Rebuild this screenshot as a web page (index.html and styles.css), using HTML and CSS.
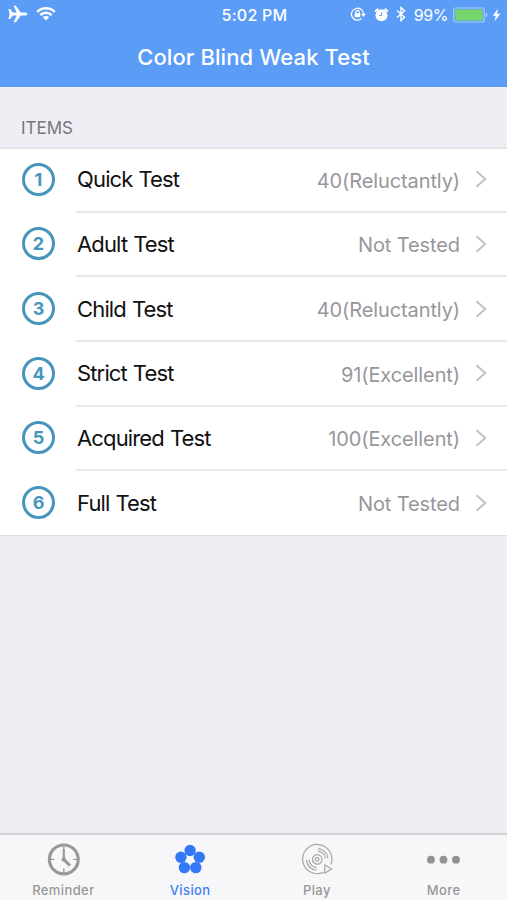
FILE: index.html
```html
<!DOCTYPE html>
<html lang="en">
<head>
<meta charset="utf-8">
<title>Color Blind Weak Test</title>
<link rel="stylesheet" href="styles.css">
</head>
<body>
<div class="app">
  <header class="header">
    <div class="status">
      <div class="status-left">
        <svg width="20" height="18" viewBox="0 0 20 18" fill="#fff"><path d="M.5 4h1.7l2.5 3.5h4L5.6.8h2.2l5 6.7h4.6c2.6 0 2.6 3 0 3h-4.6l-5 6.7H5.6l3.1-6.7h-4L2.2 14H.5l1-5z"/></svg>
        <svg width="20" height="14" viewBox="0 0 20 14" fill="none" stroke="#fff" stroke-width="2.5"><path d="M1.2 4.9a12.6 12.6 0 0 1 17.6 0M4.3 8.1a8 8 0 0 1 11.4 0"/><path d="M10 13.6 6.8 10.3a4.6 4.6 0 0 1 6.4 0z" fill="#fff" stroke="none"/></svg>
      </div>
      <div class="status-time">5:02 PM</div>
      <div class="status-right">
        <svg class="lock" width="16" height="16" viewBox="0 0 16 16" fill="none" stroke="#fff" stroke-width="1.2"><path d="M11.8 12.4A6 6 0 1 1 13.5 8"/><path d="M11 7.7h5l-2.5 3.2z" fill="#fff" stroke="none"/><path d="M4.7 7.2h5.6v4H4.7z" fill="#fff" stroke="none"/><path d="M5.8 7.5V6a1.7 1.7 0 0 1 3.4 0v1.5"/></svg>
        <svg class="alarm" width="15" height="15" viewBox="0 0 15 15"><circle cx="7.5" cy="8.2" r="6" fill="#fff"/><path d="M1.6 4 3.6 2.4M13.4 4l-2-1.6" stroke="#fff" stroke-width="2" stroke-linecap="round"/><path d="M7.5 5.2v3.3H5.2" stroke="#5b9cf7" stroke-width=".9" fill="none"/></svg>
        <svg class="bt" width="10" height="16" viewBox="0 0 10 16" fill="none" stroke="#fff" stroke-width="1.4"><path d="M1 4.4 8.6 11.3 5 14.5V1.5l3.6 3.2L1 11.6"/></svg>
        <span class="percent">99%</span>
        <svg class="battery" width="36" height="16" viewBox="0 0 36 16"><rect x=".7" y="1" width="30.6" height="14" rx="2" fill="none" stroke="#a9cbfb" stroke-width="1.2"/><rect x="2.3" y="2.6" width="27.4" height="10.8" rx="1" fill="#74d66d"/><path d="M32.8 5.7c2.3.7 2.3 3.9 0 4.6z" fill="#a9cbfb"/></svg>
        <svg class="bolt" width="9" height="14" viewBox="0 0 9 14" fill="#fff"><path d="M6 .6.8 7.8h3L2.5 13.4 8.3 5.8H5z"/></svg>
      </div>
    </div>
    <h1 class="title">Color Blind Weak Test</h1>
  </header>
  <main class="content">
    <h2 class="section">ITEMS</h2>
    <ul class="list">
      <li class="row"><span class="num">1</span><div class="cell"><span class="name">Quick Test</span><span class="value">40(Reluctantly)</span><svg class="chev" viewBox="0 0 12 18"><path d="m1.5 1.3 8.7 7.7-8.7 7.7"/></svg></div></li>
      <li class="row"><span class="num">2</span><div class="cell"><span class="name">Adult Test</span><span class="value">Not Tested</span><svg class="chev" viewBox="0 0 12 18"><path d="m1.5 1.3 8.7 7.7-8.7 7.7"/></svg></div></li>
      <li class="row"><span class="num">3</span><div class="cell"><span class="name">Child Test</span><span class="value">40(Reluctantly)</span><svg class="chev" viewBox="0 0 12 18"><path d="m1.5 1.3 8.7 7.7-8.7 7.7"/></svg></div></li>
      <li class="row"><span class="num">4</span><div class="cell"><span class="name">Strict Test</span><span class="value">91(Excellent)</span><svg class="chev" viewBox="0 0 12 18"><path d="m1.5 1.3 8.7 7.7-8.7 7.7"/></svg></div></li>
      <li class="row"><span class="num">5</span><div class="cell"><span class="name">Acquired Test</span><span class="value">100(Excellent)</span><svg class="chev" viewBox="0 0 12 18"><path d="m1.5 1.3 8.7 7.7-8.7 7.7"/></svg></div></li>
      <li class="row"><span class="num">6</span><div class="cell"><span class="name">Full Test</span><span class="value">Not Tested</span><svg class="chev" viewBox="0 0 12 18"><path d="m1.5 1.3 8.7 7.7-8.7 7.7"/></svg></div></li>
    </ul>
  </main>
  <nav class="tabs">
    <div class="tab">
      <svg width="34" height="34" viewBox="0 0 34 34" fill="none" stroke="#999"><circle cx="17.8" cy="17.4" r="14.4" stroke-width="3.2"/><path d="M17.8 4.4v4M17.8 26.4v4M4.8 17.4h3.5M27.3 17.4h3.5" stroke-width="1.4"/><path d="M17.8 8.4v9" stroke-width="2.2" stroke-linecap="round"/><path d="m17.8 17.4 6.2 6.2" stroke-width="3"/><circle cx="17.8" cy="17.4" r="2.2" fill="#999" stroke="none"/></svg>
      <span>Reminder</span>
    </div>
    <div class="tab active">
      <svg width="34" height="34" viewBox="0 0 34 34" fill="#3478f6"><circle cx="17.1" cy="8.5" r="5.7"/><circle cx="26.3" cy="15.2" r="5.7"/><circle cx="22.8" cy="25.6" r="5.7"/><circle cx="11.4" cy="25.6" r="5.7"/><circle cx="7.9" cy="15.2" r="5.7"/></svg>
      <span>Vision</span>
    </div>
    <div class="tab">
      <svg width="34" height="34" viewBox="0 0 34 34" fill="none" stroke="#a5a5a5" stroke-width="1.2"><path d="M23.6 30.2A14.6 14.6 0 1 1 30.8 22.5"/><circle cx="17.2" cy="17.4" r="4.7"/><circle cx="17.2" cy="17.4" r="1.8"/><path d="M18 6.6A10.8 10.8 0 0 1 28 16.4M18 9.2a8.2 8.2 0 0 1 7.4 7.2M6.4 17.9a10.8 10.8 0 0 0 10.2 10.3M9 17.9a8.2 8.2 0 0 0 7.6 7.7"/><path d="m24.8 23 6.8 4.1-6.8 4.1z"/></svg>
      <span>Play</span>
    </div>
    <div class="tab">
      <svg width="34" height="34" viewBox="0 0 34 34" fill="#929292"><circle cx="3.9" cy="17.7" r="3.9"/><circle cx="16.5" cy="17.7" r="3.9"/><circle cx="29" cy="17.7" r="3.9"/></svg>
      <span>More</span>
    </div>
  </nav>
</div>
</body>
</html>
```
FILE: styles.css
```css
* { box-sizing: border-box; }
body {
  margin: 0;
  font-family: Inter, "Liberation Sans", sans-serif;
  background: #efeef4;
}
svg { display: block; flex: none; }
.app {
  height: 900px;
  display: flex;
  flex-direction: column;
  overflow: hidden;
}
.header {
  height: 87px;
  flex: none;
  background: #5b9cf7;
  color: #fff;
}
.status {
  height: 29px;
  display: grid;
  grid-template-columns: 1fr auto 1fr;
  align-items: center;
  padding: 0 6px 0 8px;
}
.status-left { display: flex; align-items: center; gap: 8px; padding-bottom: 1px; }
.status-time { font-size: 16px; font-weight: 500; letter-spacing: .25px; }
.status-right { display: flex; align-items: center; justify-content: flex-end; }
.lock { margin-bottom: 1px; }
.alarm { margin-left: 8px; margin-bottom: 1px; }
.bt { margin-left: 7px; margin-bottom: 1px; }
.percent { font-size: 16px; margin-left: 8px; letter-spacing: -.4px; }
.battery { margin-left: 5px; }
.bolt { margin-left: 3px; }
.title {
  margin: 0;
  height: 58px;
  line-height: 57px;
  text-align: center;
  font-size: 22px;
  font-weight: 500;
  letter-spacing: .1px;
}
.content { flex: 1; }
.section {
  margin: 0;
  height: 60px;
  padding: 31px 0 0 21px;
  font-size: 17px;
  line-height: 21px;
  font-weight: 400;
  letter-spacing: 0;
  color: #77777c;
}
.list {
  margin: 0;
  padding: 1px 0 0;
  height: 389px;
  list-style: none;
  background: #fff;
  box-shadow: inset 0 2px #e4e4e7, inset 0 -1px #dcdce0;
  display: grid;
  grid-template-rows: repeat(6, 1fr);
}
.row { display: flex; padding-left: 22px; }
.num {
  width: 33px;
  height: 33px;
  margin: 14.6px 21px 0 0;
  flex: none;
  border: 3px solid #4595bd;
  border-radius: 50%;
  color: #4595bd;
  font-size: 18px;
  line-height: 27px;
  font-weight: 700;
  text-align: center;
}
.cell {
  flex: 1;
  display: flex;
  align-items: center;
  padding: 0 20px 0 1px;
  border-bottom: 2px solid #e8e8ea;
}
.row:last-child .cell { border-bottom-color: transparent; }
.name { flex: 1; font-size: 22px; letter-spacing: -.85px; word-spacing: .6px; color: #111; }
.value { font-size: 20px; letter-spacing: -.1px; color: #97979b; padding-top: 3px; }
.chev {
  width: 12px;
  height: 18px;
  margin-left: 15px;
  fill: none;
  stroke: #c2c2c6;
  stroke-width: 2;
}
.tabs {
  height: 67px;
  flex: none;
  display: grid;
  grid-template-columns: repeat(4, 1fr);
  background: #f7f7f9;
  border-top: 2px solid #d0d0d5;
}
.tab {
  display: flex;
  flex-direction: column;
  align-items: center;
  padding-top: 7px;
  color: #979797;
  font-size: 13px;
  line-height: 16px;
  font-weight: 500;
  letter-spacing: .4px;
}
.tab span { margin-top: 6px; }
.active { color: #3e82f4; }
```
